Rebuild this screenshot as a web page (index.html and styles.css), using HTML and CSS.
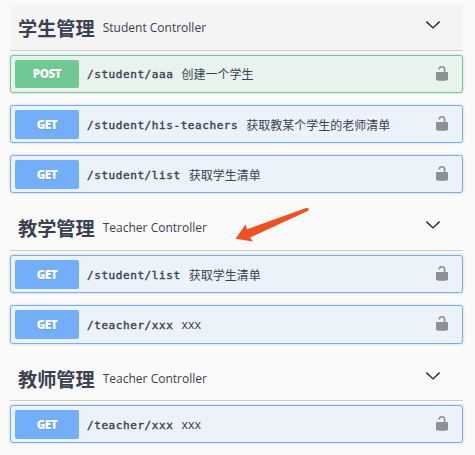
FILE: index.html
```html
<!DOCTYPE html>
<html lang="zh-CN">
<head>
<meta charset="utf-8">
<title>API</title>
<link rel="stylesheet" href="styles.css">
</head>
<body>
<svg class="defs" aria-hidden="true">
  <symbol id="chevron" viewBox="0 0 14 8"><path d="M.4.6 7 6.9 13.6.6" fill="none" stroke="currentColor" stroke-width="1.4"/></symbol>
  <symbol id="unlocked" viewBox="0 0 12 15"><path d="M3.200 3.500C3.200 1.600 4.200.8 5.900.8c1.800 0 2.700.9 2.700 2.700V7" fill="none" stroke="currentColor" stroke-width="1.600"/><path d="M1 6h10q1 0 1 1v6.200q0 .8-.8 1.100-.8.400-1.700.400h-7q-.9 0-1.700-.400Q0 14 0 13.200V7q0-1 1-1z"/></symbol>
</svg>
<main class="api">
  <section class="group">
    <header class="tag active"><h3>学生管理</h3><small>Student Controller</small><svg class="chevron"><use href="#chevron"/></svg></header>
    <div class="op post"><span class="method">POST</span><span class="path">/student/aaa</span><span class="summary">创建一个学生</span><svg class="lock"><use href="#unlocked"/></svg></div>
    <div class="op get"><span class="method">GET</span><span class="path">/student/his-teachers</span><span class="summary">获取教某个学生的老师清单</span><svg class="lock"><use href="#unlocked"/></svg></div>
    <div class="op get"><span class="method">GET</span><span class="path">/student/list</span><span class="summary">获取学生清单</span><svg class="lock"><use href="#unlocked"/></svg></div>
  </section>
  <section class="group">
    <header class="tag"><h3>教学管理</h3><small>Teacher Controller</small><svg class="chevron"><use href="#chevron"/></svg></header>
    <div class="op get"><span class="method">GET</span><span class="path">/student/list</span><span class="summary">获取学生清单</span><svg class="lock"><use href="#unlocked"/></svg></div>
    <div class="op get tall"><span class="method">GET</span><span class="path">/teacher/xxx</span><span class="summary latin">xxx</span><svg class="lock"><use href="#unlocked"/></svg></div>
  </section>
  <section class="group">
    <header class="tag short"><h3>教师管理</h3><small>Teacher Controller</small><svg class="chevron"><use href="#chevron"/></svg></header>
    <div class="op get"><span class="method">GET</span><span class="path">/teacher/xxx</span><span class="summary latin">xxx</span><svg class="lock"><use href="#unlocked"/></svg></div>
  </section>
</main>
<svg class="arrow" viewBox="0 0 76 38"><path d="M.5 33.7 10.7 19.3 11.9 24.3 71.8 2.7Q74.6 3 73.2 5.8L15.2 32.5 17.7 36.5Z"/></svg>
</body>
</html>
```

FILE: styles.css
```css
* {
  box-sizing: border-box;
}

body {
  margin: 0;
  height: 455px;
  overflow: hidden;
  background: #fafafa;
  color: #3b4151;
  font-family: "Open Sans", "Noto Sans CJK SC", sans-serif;
}

.defs {
  position: absolute;
  width: 0;
  height: 0;
}

.api {
  width: 453px;
  margin-left: 10px;
  padding-top: 5px;
}

.group {
  display: flex;
  flex-direction: column;
  gap: 12px;
  margin-bottom: 12px;
}

.tag {
  display: flex;
  align-items: center;
  height: 46px;
  margin-bottom: -8px;
  padding: 0 23px 0 8px;
  border-bottom: 1px solid #cbccd0;
}

.tag.active {
  background: #f4f4f4;
}

.tag.short {
  height: 45px;
  padding-top: 1px;
}

.tag h3 {
  margin: 0;
  font: 700 19.2px/24px "Noto Sans CJK SC", sans-serif;
}

.tag small {
  margin-left: 8px;
  font-size: 12px;
  line-height: 18px;
}

.chevron {
  width: 14px;
  height: 8px;
  margin: -5px 0 0 auto;
  color: #222;
}

.op {
  display: flex;
  align-items: flex-start;
  height: 38px;
  padding: 4px 14px 3px 4px;
  border: 1px solid #73aff8;
  border-radius: 3px;
  background: #ebf2fa;
  box-shadow: 0 0 3px rgba(0, 0, 0, .19);
}

.op.tall {
  height: 39px;
}

.op.post {
  border-color: #70c995;
  background: #e9f3ee;
}

.method {
  width: 64px;
  height: 29px;
  border-radius: 2px;
  background: #73aef8;
  color: #fff;
  font: 800 11.5px/30px "Open Sans", sans-serif;
  letter-spacing: -.35px;
  text-align: center;
  text-shadow: 0 1px 0 rgba(0, 0, 0, .1);
}

.post .method {
  height: 28px;
  line-height: 28px;
  background: #70c995;
}

.path {
  margin-left: 8px;
  font: 400 11px/32px "DejaVu Sans Mono", monospace;
  letter-spacing: .58px;
  -webkit-text-stroke: .4px #3b4151;
}

.summary {
  margin-left: 8px;
  font: 12px/32px "Open Sans", "Noto Sans CJK SC", sans-serif;
}

.summary.latin {
  font-size: 12.5px;
  line-height: 30px;
}

.post .path,
.post .summary {
  line-height: 30px;
}

.lock {
  width: 12px;
  height: 15px;
  margin: 6px 0 0 auto;
  color: #8d9095;
  fill: #8d9095;
}

.post .lock {
  color: #8b928e;
  fill: #8b928e;
}

.arrow {
  position: absolute;
  left: 235px;
  top: 205px;
  width: 76px;
  height: 38px;
  fill: #ed5126;
}
```
